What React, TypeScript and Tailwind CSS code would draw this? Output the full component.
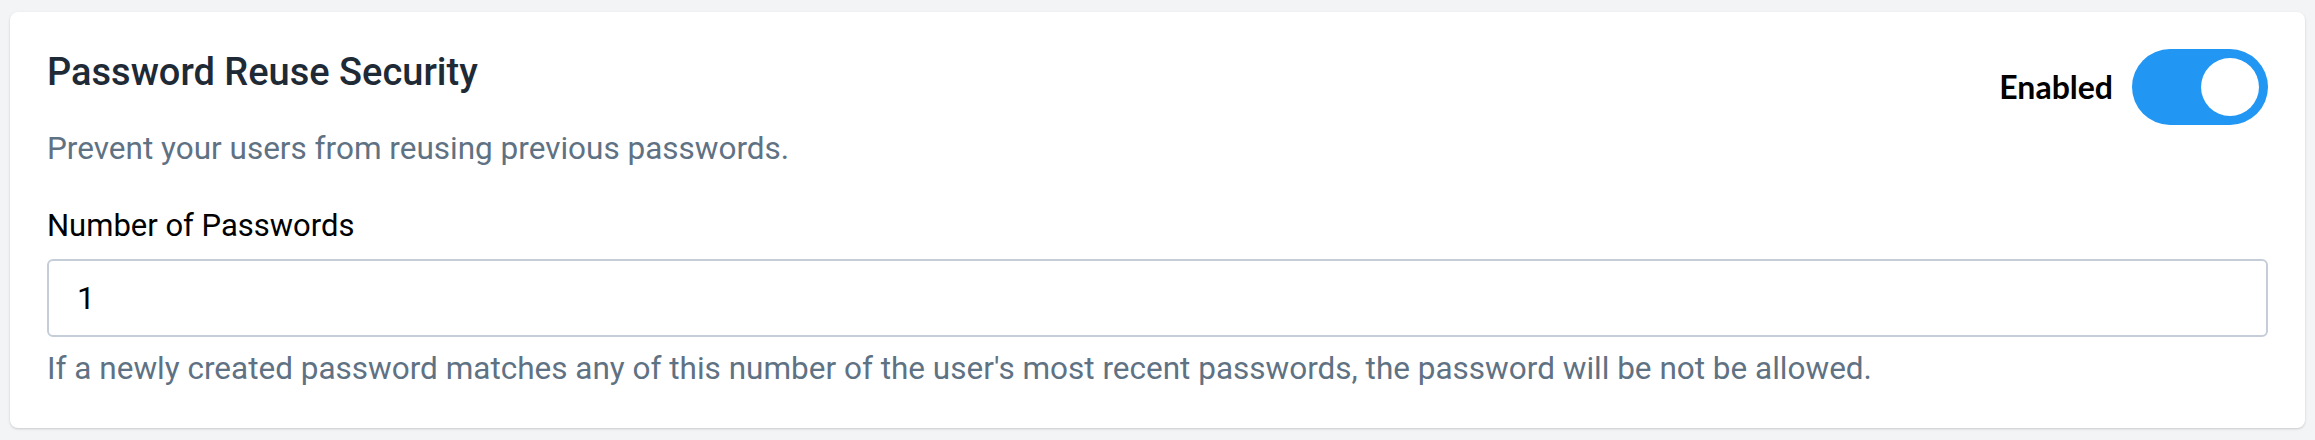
import React, { useState } from 'react';

export default function App() {
  const [enabled, setEnabled] = useState(true);
  const [count, setCount] = useState('1');

  return (
    <div className="min-h-[440px] w-full bg-[#f3f4f6] px-[10px] pt-[12px] pb-[11px]" style={{ fontFamily: 'Roboto, "Noto Sans", sans-serif' }}>
      <div className="rounded-[8px] bg-white px-[37px] pt-[37px] pb-[39px] shadow-[0_1px_3px_rgba(0,0,0,0.12),0_1px_2px_rgba(0,0,0,0.06)]">
        <div className="flex items-start justify-between">
          <div>
            <h2 className="text-[38px] leading-[46px] font-medium text-[#1f2a37]">Password Reuse Security</h2>
            <p className="mt-[34px] text-[31.5px] leading-[40px] text-[#5f7284]">
              Prevent your users from reusing previous passwords.
            </p>
          </div>
          <div className="flex items-center gap-[19px]">
            <span className="text-[32px] font-bold text-black" style={{ fontFamily: 'Lato, sans-serif' }}>
              Enabled
            </span>
            <button
              type="button"
              onClick={() => setEnabled(!enabled)}
              className={`flex h-[76px] w-[136px] items-center rounded-full px-[9px] ${enabled ? 'justify-end bg-[#2196f3]' : 'justify-start bg-[#c4cdd5]'}`}
            >
              <span className="block h-[58px] w-[58px] rounded-full bg-white" />
            </button>
          </div>
        </div>

        <label htmlFor="count" className="mt-[37px] block text-[31px] leading-[40px] text-black">
          Number of Passwords
        </label>
        <input
          id="count"
          type="text"
          value={count}
          onChange={(e) => setCount(e.target.value)}
          className="mt-[13px] block h-[78px] w-full rounded-[6px] border-2 border-[#c5ced8] bg-white px-[28px] text-[32px] text-black outline-none"
        />
        <p className="mt-[12px] text-[31.5px] leading-[40px] text-[#5f7284]">
          If a newly created password matches any of this number of the user's most recent passwords, the password will be not be allowed.
        </p>
      </div>
    </div>
  );
}
